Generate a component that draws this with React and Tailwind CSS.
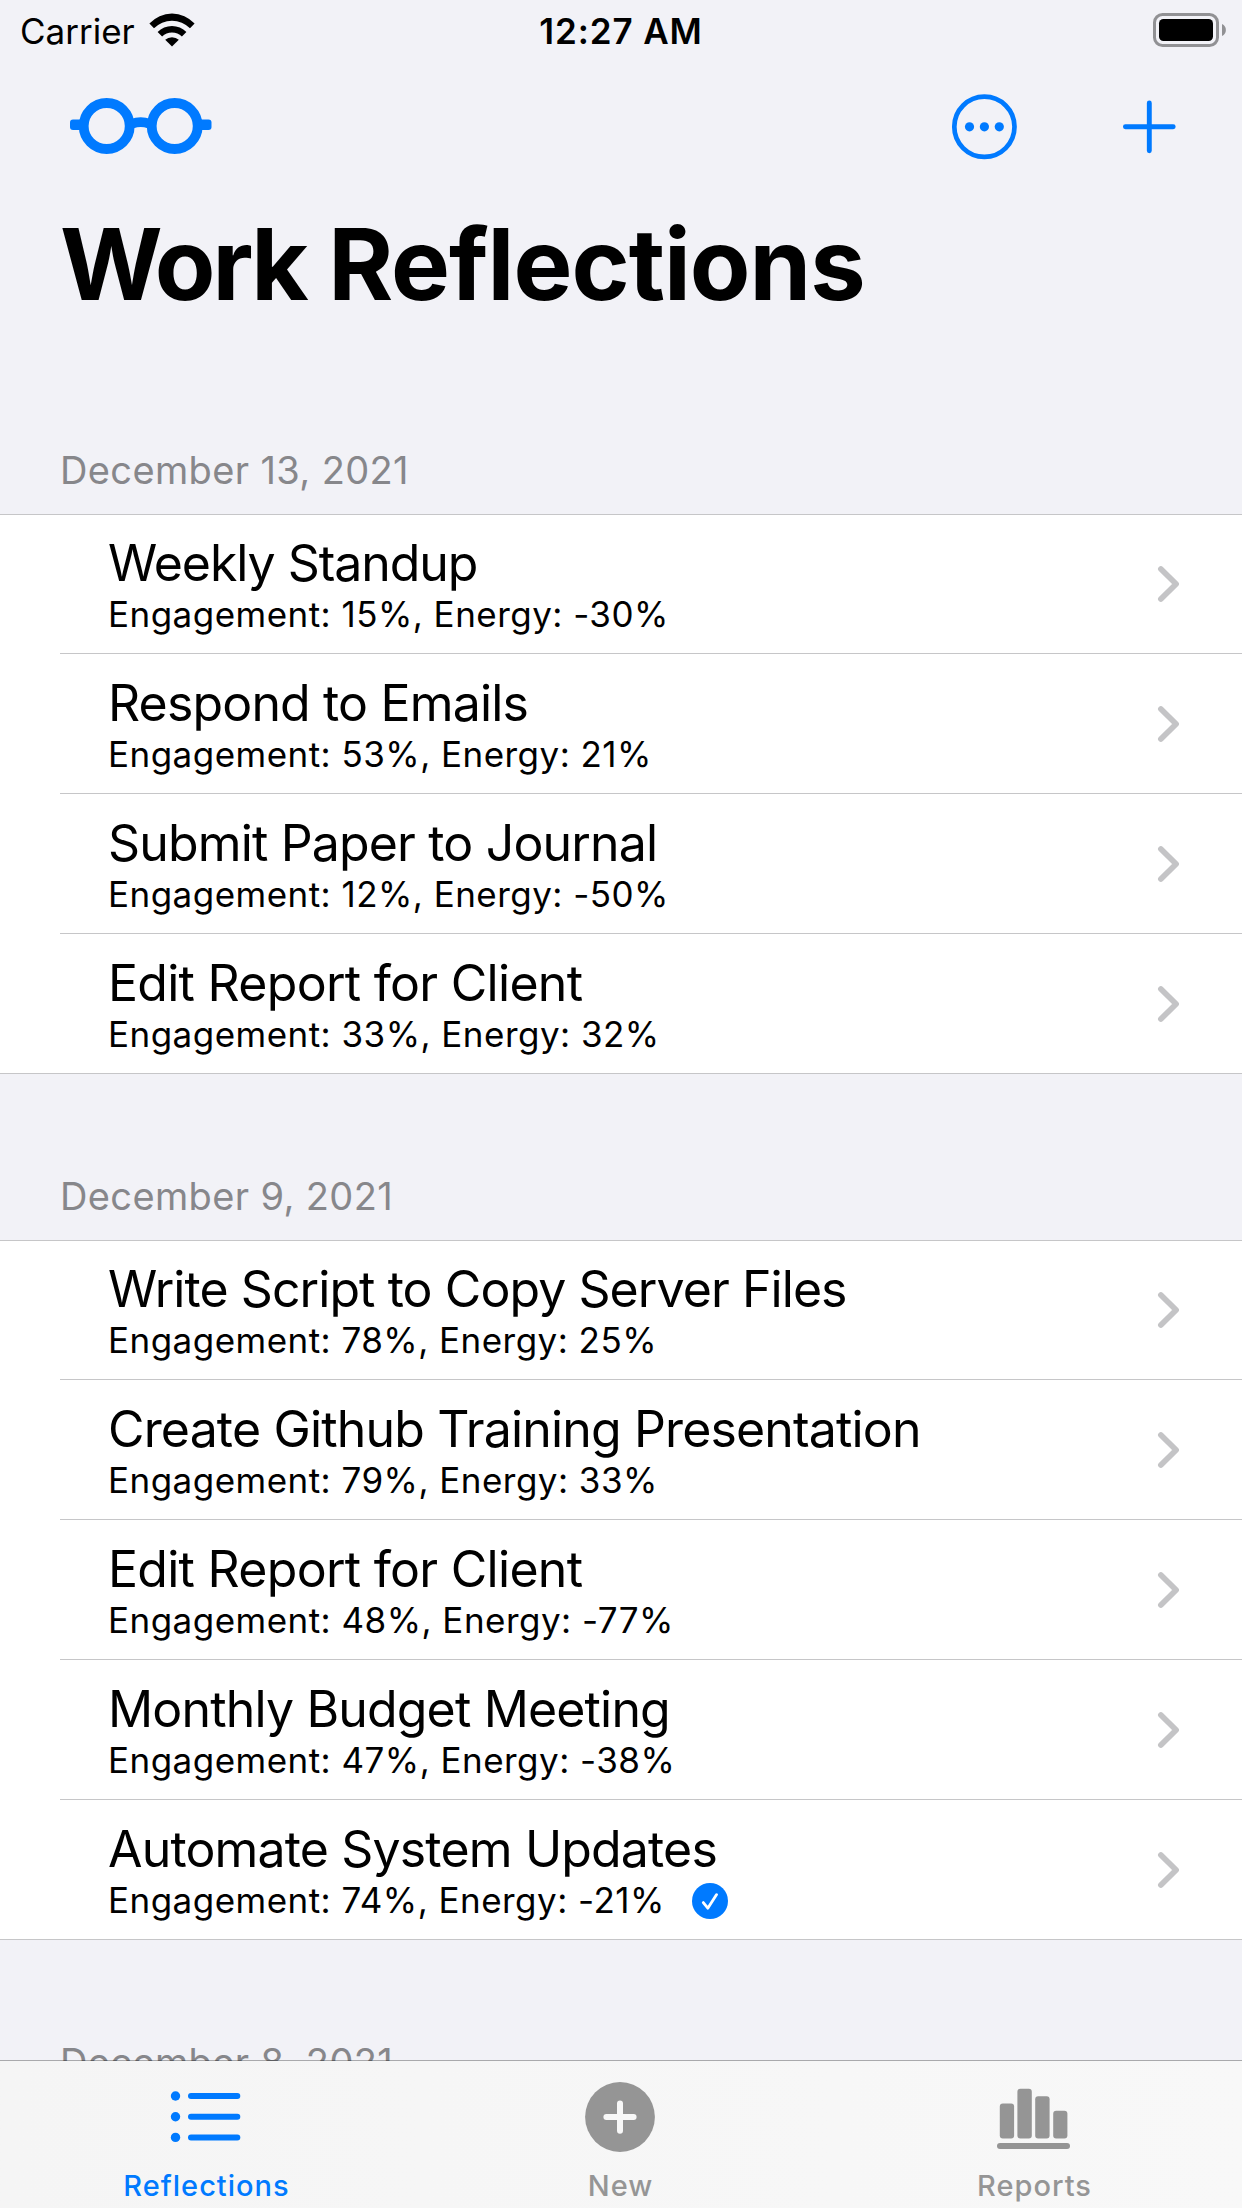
import React from "react";

const sections = [
  {
    date: "December 13, 2021",
    items: [
      { title: "Weekly Standup", engagement: 15, energy: -30, tracking: "tracking-[-1.05px]" },
      { title: "Respond to Emails", engagement: 53, energy: 21 },
      { title: "Submit Paper to Journal", engagement: 12, energy: -50 },
      { title: "Edit Report for Client", engagement: 33, energy: 32, tracking: "tracking-[-0.72px]" },
    ],
  },
  {
    date: "December 9, 2021",
    items: [
      { title: "Write Script to Copy Server Files", engagement: 78, energy: 25, tracking: "tracking-[-0.93px]" },
      { title: "Create Github Training Presentation", engagement: 79, energy: 33 },
      { title: "Edit Report for Client", engagement: 48, energy: -77, tracking: "tracking-[-0.72px]" },
      { title: "Monthly Budget Meeting", engagement: 47, energy: -38 },
      { title: "Automate System Updates", engagement: 74, energy: -21, done: true },
    ],
  },
  { date: "December 8, 2021", items: [] },
];

function WifiIcon() {
  return (
    <svg className="h-[34px] w-[46px]" viewBox="0 0 46 34" fill="currentColor">
      <path d="M0.4 10.6A30.5 30.5 0 0 1 45.6 10.6L41 15.3A25 25 0 0 0 5 15.3Z" />
      <path d="M8.6 19A20 20 0 0 1 37.4 19L32.9 23.6A14 14 0 0 0 13.1 23.6Z" />
      <path d="M16.2 26.8A10 10 0 0 1 29.8 26.8L23 33.6Z" />
    </svg>
  );
}

function BatteryIcon() {
  return (
    <svg className="h-[34px] w-[74px]" viewBox="0 0 74 34">
      <rect x="1.5" y="1.5" width="63" height="31" rx="8" fill="none" stroke="#919194" strokeWidth="3" />
      <rect x="6" y="6" width="54" height="22" rx="4.5" fill="#000" />
      <path d="M69 11A6.6 6.6 0 0 1 69 23Z" fill="#919194" />
    </svg>
  );
}

function GlassesIcon() {
  return (
    <svg className="h-[58px] w-[142px]" viewBox="0 0 142 58" fill="none" stroke="currentColor" strokeWidth="9.8">
      <circle cx="36.7" cy="29" r="23" />
      <circle cx="104.7" cy="29" r="23" />
      <path d="M62 26.8Q70.7 23.4 79.4 26.8" />
      <rect x="0" y="22.4" width="13" height="10.6" rx="3" fill="currentColor" stroke="none" />
      <rect x="128.5" y="22.4" width="13" height="10.6" rx="3" fill="currentColor" stroke="none" />
    </svg>
  );
}

function MoreIcon() {
  return (
    <svg className="h-[67px] w-[67px]" viewBox="0 0 67 67" fill="currentColor">
      <circle cx="33.4" cy="33.8" r="30.1" fill="none" stroke="currentColor" strokeWidth="4.7" />
      <circle cx="18.5" cy="33.8" r="4.6" />
      <circle cx="33.4" cy="33.8" r="4.6" />
      <circle cx="48.3" cy="33.8" r="4.6" />
    </svg>
  );
}

function PlusIcon() {
  return (
    <svg className="h-[56px] w-[56px]" viewBox="0 0 56 56" fill="none" stroke="currentColor" strokeWidth="4.9" strokeLinecap="round">
      <path d="M27.3 4.9V52.7M3.4 28.8H51.2" />
    </svg>
  );
}

function Chevron() {
  return (
    <svg className="h-[38px] w-[26px]" viewBox="0 0 26 38" fill="none" stroke="#c4c4c6" strokeWidth="5.7" strokeLinecap="round" strokeLinejoin="round">
      <path d="M4.9 4L20.1 19L4.9 34" />
    </svg>
  );
}

function CheckBadge() {
  return (
    <svg className="h-9 w-9" viewBox="0 0 36 36">
      <circle cx="18" cy="18" r="18" fill="#007aff" />
      <path d="M11.3 19.6L15.8 25.2L24.6 11.6" fill="none" stroke="#fff" strokeWidth="2.8" strokeLinecap="round" strokeLinejoin="round" />
    </svg>
  );
}

function ListIcon() {
  return (
    <svg className="h-[107px] w-[78px]" viewBox="0 0 78 107" fill="currentColor">
      {[35, 55.7, 76.4].map((y) => (
        <g key={y}>
          <circle cx="7.5" cy={y} r="4.7" />
          <rect x="20" y={y - 3} width="52.3" height="6" rx="3" />
        </g>
      ))}
    </svg>
  );
}

function NewIcon() {
  return (
    <svg className="h-[107px] w-[78px]" viewBox="0 0 78 107">
      <circle cx="38" cy="56" r="34.9" fill="currentColor" />
      <path d="M38 42.5V69.7M24.4 56.1H51.6" stroke="#f8f8f8" strokeWidth="6" strokeLinecap="round" />
    </svg>
  );
}

function ReportsIcon() {
  return (
    <svg className="h-[107px] w-[78px]" viewBox="0 0 78 107" fill="currentColor">
      <rect x="3.8" y="42.6" width="14.3" height="35" rx="3" />
      <rect x="21.4" y="27.8" width="14.4" height="49.8" rx="3" />
      <rect x="39.2" y="35.2" width="14.4" height="42.4" rx="3" />
      <rect x="57.2" y="49.8" width="14.2" height="27.8" rx="3" />
      <rect x="1" y="82" width="73" height="6.1" rx="3" />
    </svg>
  );
}

function StatusBar() {
  return (
    <div className="grid h-[60px] grid-cols-3 pt-[10px] text-[35px] leading-[42px]">
      <div className="flex items-start pl-5">
        <span>Carrier</span>
        <span className="ml-[14px] mt-[3px]">
          <WifiIcon />
        </span>
      </div>
      <div className="text-center font-[570] tracking-[0.9px]">12:27 AM</div>
      <div className="flex items-start justify-end pr-[15px] pt-[3px]">
        <BatteryIcon />
      </div>
    </div>
  );
}

function Row({ item, last }) {
  return (
    <li className="flex pl-[60px]">
      <div className={`flex h-[140px] flex-1 items-start justify-between pl-12 pr-[60px] ${last ? "" : "border-b border-[#c6c6c8]"}`}>
        <div className="pt-[19px]">
          <div className={`text-[50px] leading-[60px] ${item.tracking ?? "tracking-[-0.84px]"}`}>{item.title}</div>
          <div className="flex items-center text-[35px] leading-[43px] tracking-[0.47px]">
            <span>{`Engagement: ${item.engagement}%, Energy: ${item.energy}%`}</span>
            {item.done && (
              <span className="ml-[27px]">
                <CheckBadge />
              </span>
            )}
          </div>
        </div>
        <span className="pt-[51px]">
          <Chevron />
        </span>
      </div>
    </li>
  );
}

function Section({ section }) {
  const { date, items } = section;
  return (
    <section>
      <h2 className="h-[166px] pl-[60px] pt-[98px] text-[38px] leading-[48px] tracking-[0.37px] text-[#87878b]">{date}</h2>
      {items.length > 0 && (
        <ul className="relative bg-white before:absolute before:inset-x-0 before:top-0 before:h-px before:bg-[#c6c6c8] after:absolute after:inset-x-0 after:bottom-0 after:h-px after:bg-[#c6c6c8]">
          {items.map((item, i) => (
            <Row key={item.title} item={item} last={i === items.length - 1} />
          ))}
        </ul>
      )}
    </section>
  );
}

function Tab({ icon, label, active }) {
  return (
    <button className={`flex w-[414px] flex-col items-center text-[29px] font-medium leading-[35px] tracking-[1px] ${active ? "text-[#007aff]" : "text-[#959595]"}`}>
      {icon}
      <span className="pr-px">{label}</span>
    </button>
  );
}

export default function App() {
  return (
    <div className="relative h-[2208px] w-[1242px] overflow-hidden bg-[#f2f2f7] font-['Inter',sans-serif] text-black">
      <StatusBar />
      <nav className="flex h-[132px] items-center pl-[70px] pr-[64px] text-[#007aff]">
        <GlassesIcon />
        <div className="ml-auto flex items-center gap-[104px]">
          <MoreIcon />
          <PlusIcon />
        </div>
      </nav>
      <h1 className="h-[156px] whitespace-nowrap pl-[60px] pt-3 text-[99px] font-bold leading-[120px] tracking-[-0.97px]">
        <span className="tracking-[-3px]">Work</span> Reflections
      </h1>
      <main>
        {sections.map((section) => (
          <Section key={section.date} section={section} />
        ))}
      </main>
      <div className="absolute inset-x-0 bottom-0 flex h-[148px] items-start border-t border-black/30 bg-linear-to-r from-[#f5f5f5] to-[#f8f8f8] bg-clip-padding">
        <Tab icon={<ListIcon />} label="Reflections" active />
        <Tab icon={<NewIcon />} label="New" />
        <Tab icon={<ReportsIcon />} label="Reports" />
      </div>
    </div>
  );
}
